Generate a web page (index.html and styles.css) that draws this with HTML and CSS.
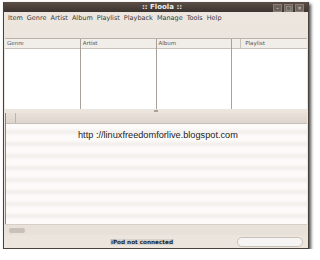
FILE: index.html
```html
<!DOCTYPE html>
<html>
<head>
	<title>Floola</title>
	<link rel="stylesheet" href="styles.css">
</head>
<body>
	<div class="window">
		<div class="titlebar">
			<span class="title">:: Floola ::</span>
			<div class="win-buttons">
				<span class="wbtn">&#8211;</span>
				<span class="wbtn">&#9633;</span>
				<span class="wbtn">&#215;</span>
			</div>
		</div>
		<div class="menubar">
			<span>Item</span>
			<span>Genre</span>
			<span>Artist</span>
			<span>Album</span>
			<span>Playlist</span>
			<span>Playback</span>
			<span>Manage</span>
			<span>Tools</span>
			<span>Help</span>
		</div>
		<div class="toolbar"></div>
		<div class="browser">
			<div class="pane"><div class="head">Genre</div></div>
			<div class="pane"><div class="head">Artist</div></div>
			<div class="pane"><div class="head">Album</div></div>
			<div class="pane last"><div class="head"><span class="stub"></span>Playlist</div></div>
		</div>
		<div class="splitter"><span class="grip"></span></div>
		<div class="tracks">
			<div class="track-head"><span class="stub"></span></div>
			<div class="rows">
				<p class="url">http ://linuxfreedomforlive.blogspot.com</p>
			</div>
		</div>
		<div class="hscroll"><span class="thumb"></span></div>
		<div class="statusbar">
			<span class="status">iPod not connected</span>
			<span class="search"></span>
		</div>
	</div>
</body>
</html>
```

FILE: styles.css
```css
body {
	margin: 0;
	background: #fff;
	font-family: "DejaVu Sans", sans-serif;
}
.window {
	margin: 2px 0 0 3px;
	width: 306px;
	height: 247px;
	background: #ebe5de;
	border: 1px solid #4a413a;
	border-top: none;
	box-shadow: 2px 2px 3px rgba(0, 0, 0, 0.7);
	display: flex;
	flex-direction: column;
	box-sizing: border-box;
}
.titlebar {
	height: 10px;
	background: linear-gradient(#5b4f46, #3d3430);
	display: flex;
	align-items: center;
	justify-content: center;
	position: relative;
}
.title {
	color: #eee;
	font-size: 7px;
	font-weight: bold;
	padding-left: 12px;
}
.win-buttons {
	position: absolute;
	right: 4px;
	top: 2px;
	display: flex;
	gap: 2px;
}
.wbtn {
	width: 7px;
	height: 6px;
	background: #6d625a;
	border: 1px solid #8a7f76;
	color: #ddd;
	font-size: 6px;
	line-height: 6px;
	text-align: center;
}
.menubar {
	height: 12px;
	display: flex;
	align-items: center;
	gap: 4px;
	padding-left: 4px;
	font-size: 6.5px;
	color: #3a3a3a;
	background: #ece6df;
}
.toolbar {
	height: 14px;
}
.browser {
	height: 70px;
	display: flex;
	margin: 0 1px;
	background: #fff;
	border-top: 1px solid #b9b2ab;
}
.pane {
	flex: 1;
	border-right: 1px solid #a8a19a;
}
.pane.last {
	border-right: none;
}
.head {
	height: 9px;
	background: #f1ede9;
	border-bottom: 1px solid #c9c2bb;
	font-size: 5.5px;
	color: #555;
	line-height: 9px;
	padding-left: 2px;
	display: flex;
}
.head .stub {
	width: 8px;
	border-right: 1px solid #c9c2bb;
	margin: 0 4px 0 -2px;
}
.splitter {
	height: 4px;
	display: flex;
	justify-content: center;
	align-items: center;
}
.grip {
	width: 4px;
	height: 2px;
	background: #a8a19a;
}
.tracks {
	flex: 1;
	margin: 0 1px;
	display: flex;
	flex-direction: column;
	border-left: 1px solid #8c8580;
}
.track-head {
	height: 10px;
	background: linear-gradient(#e8e1da, #ddd5cd);
	border-bottom: 1px solid #c7bfb7;
	display: flex;
}
.track-head .stub {
	width: 9px;
	border-right: 1px solid #bdb5ad;
}
.rows {
	flex: 1;
	background: repeating-linear-gradient(#fcfbfa 0, #fcfbfa 4px, #f2eeea 8px, #fcfbfa 12px);
}
.url {
	margin: 6px 0 0 72px;
	font-family: "Liberation Sans", Arial, sans-serif;
	font-size: 9.2px;
	color: #222;
}
.hscroll {
	height: 10px;
	margin: 0 1px;
	background: #e7e1da;
	border-top: 1px solid #d6cfc8;
	display: flex;
	align-items: center;
	padding-left: 4px;
}
.thumb {
	width: 16px;
	height: 5px;
	background: #c9c1b9;
	border-radius: 2px;
}
.statusbar {
	height: 13px;
	display: flex;
	align-items: center;
	position: relative;
}
.status {
	margin-left: 106px;
	font-size: 5.7px;
	font-weight: bold;
	color: #222;
	background: #d8d2cc;
	padding: 0 1px;
}
.search {
	margin-left: auto;
	margin-right: 5px;
	width: 64px;
	height: 8px;
	background: #f7f5f3;
	border: 1px solid #c8c1ba;
	border-radius: 5px;
}
```
